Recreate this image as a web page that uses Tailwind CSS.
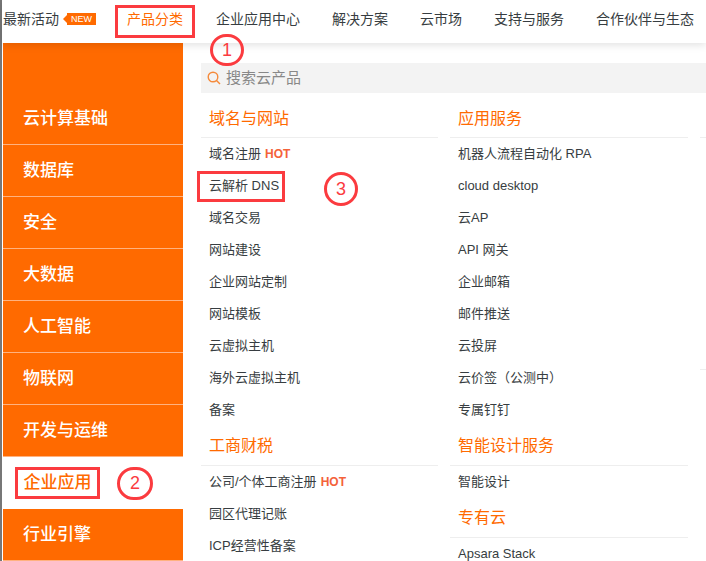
<!DOCTYPE html>
<html lang="en">
<head>
    <meta charset="UTF-8">
    <title>产品分类</title>
    <script src="https://cdn.jsdelivr.net/npm/@tailwindcss/browser@4"></script>
</head>
<body class="bg-white w-[706px] h-[561px] overflow-hidden font-['Liberation_Sans','Noto_Sans_CJK_SC',sans-serif] text-[13px] text-[#373d41]">
    <div class="h-[561px] border-l-2 border-[#777] flex flex-col">
        <!-- top nav -->
        <header class="relative z-10 h-[43px] shrink-0 bg-white shadow-[0_2px_8px_rgba(0,0,0,0.12)] flex items-start text-[14px] leading-[38px]">
            <span class="ml-px">最新活动</span>
            <span class="relative ml-[8px] mt-[13px] h-3 w-[29px] bg-[#ff6a00] text-white text-[9px] leading-3 text-center">NEW
                <span class="absolute -left-[4px] top-[2px] border-y-[4px] border-r-[4px] border-y-transparent border-r-[#ff6a00]"></span>
            </span>
            <span class="ml-[19px] mt-[5px] w-[80px] h-[33px] border-[3px] border-[#fb3b3f] text-[#ff6a00] text-center leading-[22px]">产品分类</span>
            <nav class="ml-[21px] flex gap-[32px] whitespace-nowrap">
                <a>企业应用中心</a>
                <a>解决方案</a>
                <a>云市场</a>
                <a>支持与服务</a>
                <a>合作伙伴与生态</a>
            </nav>
        </header>

        <div class="flex flex-1 min-h-0">
            <!-- left categories -->
            <aside class="ml-px w-[180px] shrink-0 bg-[#ff6a00] pt-[50px] text-white text-[17px] font-medium">
                <div class="h-[52px] pl-5 flex items-center border-b border-[#ffb27f]">云计算基础</div>
                <div class="h-[52px] pl-5 flex items-center border-b border-[#ffb27f]">数据库</div>
                <div class="h-[52px] pl-5 flex items-center border-b border-[#ffb27f]">安全</div>
                <div class="h-[52px] pl-5 flex items-center border-b border-[#ffb27f]">大数据</div>
                <div class="h-[52px] pl-5 flex items-center border-b border-[#ffb27f]">人工智能</div>
                <div class="h-[52px] pl-5 flex items-center border-b border-[#ffb27f]">物联网</div>
                <div class="h-[52px] pl-5 flex items-center border-b border-[#ffb27f]">开发与运维</div>
                <div class="relative h-[52px] bg-white text-[#ff6a00] flex items-center pl-3">
                    <span class="w-[85px] h-[32px] border-[3px] border-[#fb3b3f] flex items-center justify-center">企业应用</span>
                    <span class="absolute left-[114px] top-[10px] w-9 h-[33px] rounded-full border-[3px] border-[#fb3b3f] text-[#fb3b3f] text-[18px] font-normal flex items-center justify-center">2</span>
                </div>
                <div class="h-[52px] pl-5 flex items-center border-b border-[#ffb27f]">行业引擎</div>
            </aside>

            <!-- product panel -->
            <main class="relative z-20 flex-1 min-w-0 overflow-visible pl-[18px] pt-5">
                <span class="absolute left-[27px] -top-[9px] w-[34px] h-[32px] rounded-full border-[3px] border-[#fb3b3f] text-[#fb3b3f] text-[18px] flex items-center justify-center">1</span>
                <div class="h-[30px] bg-[#f3f3f3] flex items-center pl-[6px] text-[#888] text-[15px] gap-[5px]">
                    <svg class="w-[14px] h-[14px]" viewBox="0 0 14 14" fill="none" stroke="#f58a3b" stroke-width="1.4"><circle cx="6" cy="6" r="4.8"/><path d="M9.5 9.5L13 13"/></svg>
                    搜索云产品
                </div>
                <div class="flex mt-[8px] gap-[12px] whitespace-nowrap">
                    <div class="w-[237px] shrink-0">
                        <h3 class="h-[37px] pl-[8px] flex items-center border-b border-[#eee] text-[#ff6a00] text-[16px]">域名与网站</h3>
                        <p class="h-8 pl-[8px] flex items-center">域名注册<b class="ml-1 text-[#f4623a] text-[12px]">HOT</b></p>
                        <p class="relative h-8 pl-[8px] flex items-center">云解析 DNS
                            <span class="absolute -left-[4px] top-[1px] w-[88px] h-[31px] border-[3px] border-[#fb3b3f]"></span>
                            <span class="absolute left-[123px] top-[2px] w-[34px] h-[34px] rounded-full border-[3px] border-[#fb3b3f] text-[#fb3b3f] text-[18px] flex items-center justify-center">3</span>
                        </p>
                        <p class="h-8 pl-[8px] flex items-center">域名交易</p>
                        <p class="h-8 pl-[8px] flex items-center">网站建设</p>
                        <p class="h-8 pl-[8px] flex items-center">企业网站定制</p>
                        <p class="h-8 pl-[8px] flex items-center">网站模板</p>
                        <p class="h-8 pl-[8px] flex items-center">云虚拟主机</p>
                        <p class="h-8 pl-[8px] flex items-center">海外云虚拟主机</p>
                        <p class="h-8 pl-[8px] flex items-center">备案</p>
                        <h3 class="h-[40px] pl-[8px] flex items-center border-b border-[#eee] text-[#ff6a00] text-[16px]">工商财税</h3>
                        <p class="h-8 pl-[8px] flex items-center">公司/个体工商注册<b class="ml-1 text-[#f4623a] text-[12px]">HOT</b></p>
                        <p class="h-8 pl-[8px] flex items-center">园区代理记账</p>
                        <p class="h-8 pl-[8px] flex items-center">ICP经营性备案</p>
                    </div>
                    <div class="w-[238px] shrink-0">
                        <h3 class="h-[37px] pl-[8px] flex items-center border-b border-[#eee] text-[#ff6a00] text-[16px]">应用服务</h3>
                        <p class="h-8 pl-[8px] flex items-center">机器人流程自动化 RPA</p>
                        <p class="h-8 pl-[8px] flex items-center">cloud desktop</p>
                        <p class="h-8 pl-[8px] flex items-center">云AP</p>
                        <p class="h-8 pl-[8px] flex items-center">API 网关</p>
                        <p class="h-8 pl-[8px] flex items-center">企业邮箱</p>
                        <p class="h-8 pl-[8px] flex items-center">邮件推送</p>
                        <p class="h-8 pl-[8px] flex items-center">云投屏</p>
                        <p class="h-8 pl-[8px] flex items-center">云价签（公测中）</p>
                        <p class="h-8 pl-[8px] flex items-center">专属钉钉</p>
                        <h3 class="h-[40px] pl-[8px] flex items-center border-b border-[#eee] text-[#ff6a00] text-[16px]">智能设计服务</h3>
                        <p class="h-8 pl-[8px] flex items-center">智能设计</p>
                        <h3 class="h-[40px] pl-[8px] flex items-center border-b border-[#eee] text-[#ff6a00] text-[16px]">专有云</h3>
                        <p class="h-8 pl-[8px] flex items-center">Apsara Stack</p>
                    </div>
                    <!-- next column, only its rules show at the right edge -->
                    <div class="flex-1 min-w-0">
                        <div class="h-[37px] border-b border-[#eee]"></div>
                        <div class="h-[232px] border-b border-[#eee]"></div>
                    </div>
                </div>
            </main>
        </div>
    </div>
</body>
</html>
